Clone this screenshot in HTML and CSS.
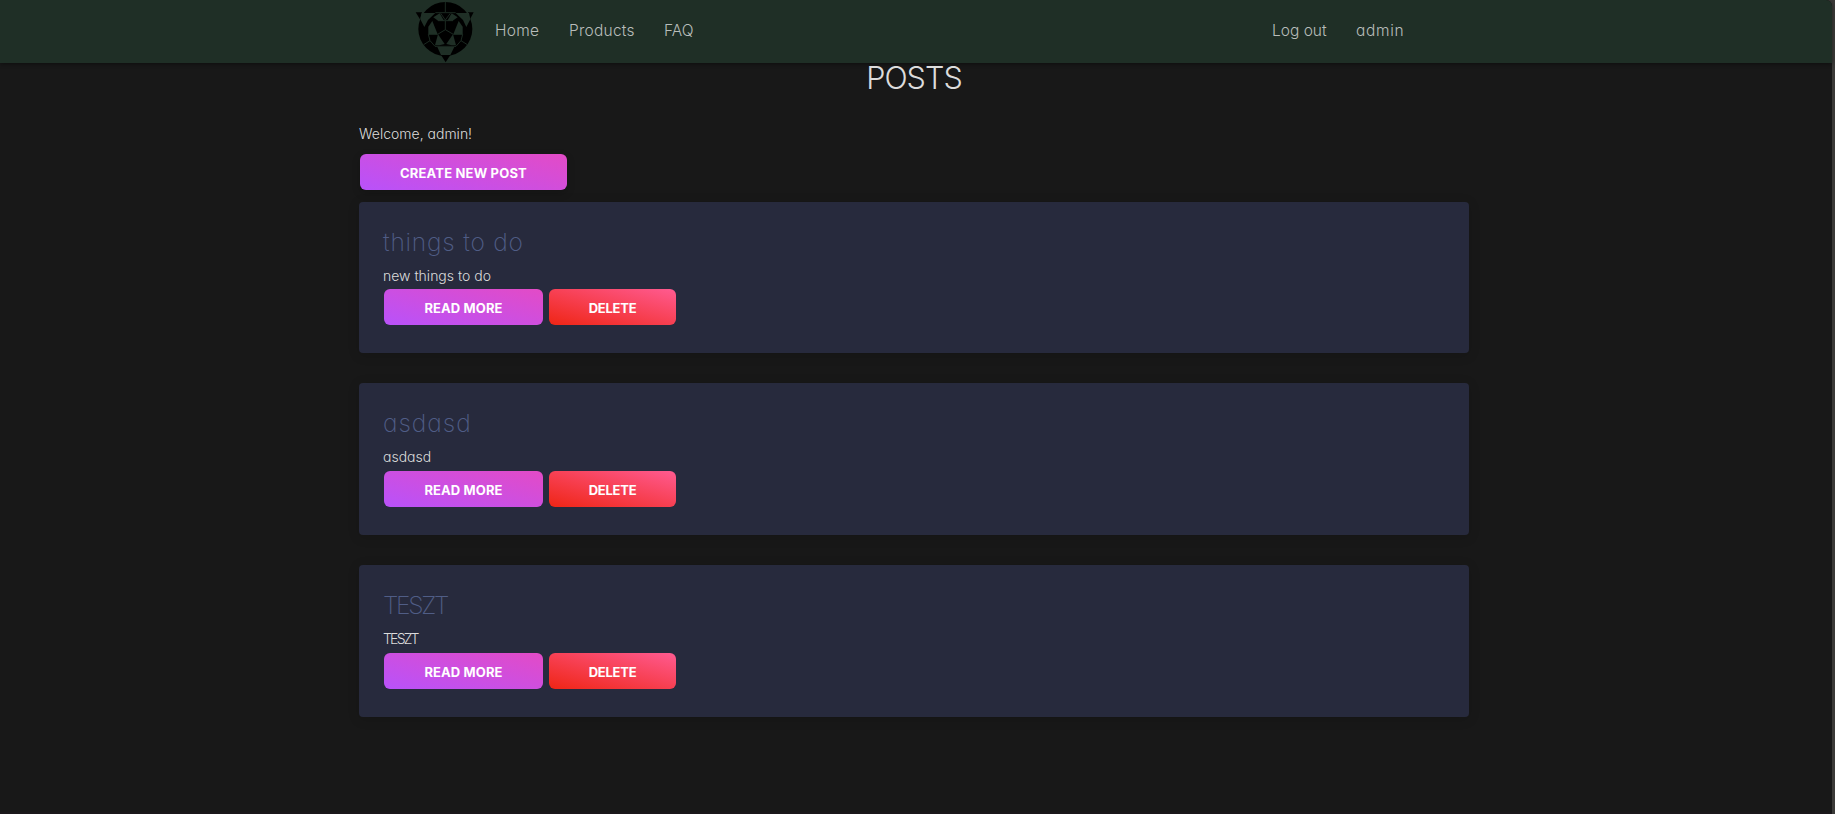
FILE: index.html
```html
<!DOCTYPE html>
<html lang="en">
<head>
<meta charset="utf-8">
<title>Posts</title>
<link rel="stylesheet" href="styles.css">
</head>
<body>
<div class="page">
  <header class="navbar">
    <svg class="logo" viewBox="0 0 210 189" aria-label="Logo">
      <circle cx="106" cy="87" r="81" fill="#000"/>
      <path d="M17 37H36L30 58Z" fill="#000"/>
      <path d="M191 37H174L180 58Z" fill="#000"/>
      <path d="M93 165H121L107 187Z" fill="#000"/>
      <g fill="#1f2f26">
        <path d="M35 39H76L54 60L43 81L31 58Z"/>
        <path d="M177 39H137L159 60L169 81L181 58Z"/>
        <path d="M70 52L84 62L102 62L89 40Z"/>
        <path d="M143 52L128 62L112 62L125 40Z"/>
        <path d="M67 63L83 103H55V80Z"/>
        <path d="M146 63L130 103H158V80Z"/>
        <path d="M84 103L104 132L88 136H75Z"/>
        <path d="M129 103L109 132L125 136H138Z"/>
        <path d="M82 141H133L121 165H93Z"/>
      </g>
      <path d="M92 40H121L106 60Z" fill="#000"/>
      <path d="M106 5V36M76 38H137M92 40L106 60L121 40M84 62H129M55 103H83L106 89L130 103H158M106 62V89M60 122L41 134M153 122L172 134M55 103L60 122L75 139H138L153 122L158 103" fill="none" stroke="#1f2f26" stroke-width="2.6"/>
    </svg>
    <nav class="links">
      <a class="home">Home</a><a class="products">Products</a><a class="faq">FAQ</a>
    </nav>
    <nav class="account"><a class="logout">Log out</a><a class="user">admin</a></nav>
  </header>
  <main class="content">
    <h1><span>POSTS</span></h1>
    <p class="welcome">Welcome, admin!</p>
    <a class="btn create">CREATE NEW POST</a>
    <div class="posts">
      <article class="card">
        <h2 class="t1">things to do</h2><p class="b1">new things to do</p>
        <div class="actions"><a class="btn read">READ MORE</a><a class="btn delete">DELETE</a></div>
      </article>
      <article class="card tall">
        <h2 class="t2">asdasd</h2><p class="b2">asdasd</p>
        <div class="actions"><a class="btn read">READ MORE</a><a class="btn delete">DELETE</a></div>
      </article>
      <article class="card tall">
        <h2 class="t3">TESZT</h2><p class="b3">TESZT</p>
        <div class="actions"><a class="btn read">READ MORE</a><a class="btn delete">DELETE</a></div>
      </article>
    </div>
  </main>
</div>
<div class="scrollbar"></div>
</body>
</html>
```
FILE: styles.css
```css
* { box-sizing: border-box; }
body {
  margin: 0; height: 814px; overflow: hidden; display: flex;
  background: #3b3a38; color: #dcdcdc;
  font-family: Inter, sans-serif; font-feature-settings: "cv11"; font-size: 14px;
}
h1, h2, p { margin: 0; font-weight: 300; white-space: nowrap; }
.page { width: 1832px; height: 814px; background: #181818; border-top-right-radius: 6px; box-shadow: inset 0 -4px 2px -2px #1c181c; }
.scrollbar { width: 3px; }
.navbar {
  height: 63px; padding: 0 427px 0 410px; display: flex; align-items: center;
  background: #1f2f26; border-top-right-radius: 6px; box-shadow: 0 1px 4px rgba(0,0,0,.45);
  color: #b8bdba; font-size: 15.5px; font-weight: 300; line-height: 24px;
}
.logo { width: 70px; height: 63px; flex: none; }
.links, .account { display: flex; gap: 30px; white-space: nowrap; padding-bottom: 1px; }
.links { margin-left: 15px; }
.account { margin-left: auto; }
.home { width: 44px; letter-spacing: .3px; }
.products { width: 65px; letter-spacing: .25px; }
.faq { width: 30px; }
.logout { width: 55px; }
.user { width: 48px; letter-spacing: .7px; margin-left: -1px; margin-right: 1px; }
.content { width: 1110px; margin-left: 359px; }
h1 { height: 58px; line-height: 30px; font-size: 30.5px; letter-spacing: -.9px; text-align: center; font-weight: 350; }
.welcome { height: 33px; line-height: 26px; }
.btn {
  display: flex; align-items: center; justify-content: center; height: 36px; border-radius: 6px;
  color: #fff; font-size: 13px; font-weight: 700; white-space: nowrap; padding-top: 2px;
  background: linear-gradient(15deg, #b852fa, #e34bc6);
}
.create { width: 207px; margin-left: 1px; letter-spacing: .18px; box-shadow: 0 3px 8px rgba(0,0,0,.2); }
.read { width: 159px; letter-spacing: .12px; }
.delete { width: 127px; letter-spacing: -.25px; background: linear-gradient(15deg, #ef2515, #ff5b91); }
.posts { display: flex; flex-direction: column; gap: 30px; margin-top: 12px; }
.card {
  height: 151px; padding: 20px 24px 0 25px; border-radius: 4px;
  background: #272a3d; box-shadow: 0 2px 12px rgba(0,0,0,.15);
}
.card.tall { height: 152px; }
h2 { height: 42px; line-height: 40px; font-size: 24.5px; font-weight: 250; color: #505d86; margin-left: -1px; }
.card p { height: 25px; line-height: 23px; margin-left: -1px; }
.card.tall p { height: 26px; }
.t1 { letter-spacing: .8px; }
.t2 { letter-spacing: 1px; }
.t3 { letter-spacing: -2.3px; }
.b3 { letter-spacing: -1.8px; }
.actions { display: flex; gap: 6px; }
```
